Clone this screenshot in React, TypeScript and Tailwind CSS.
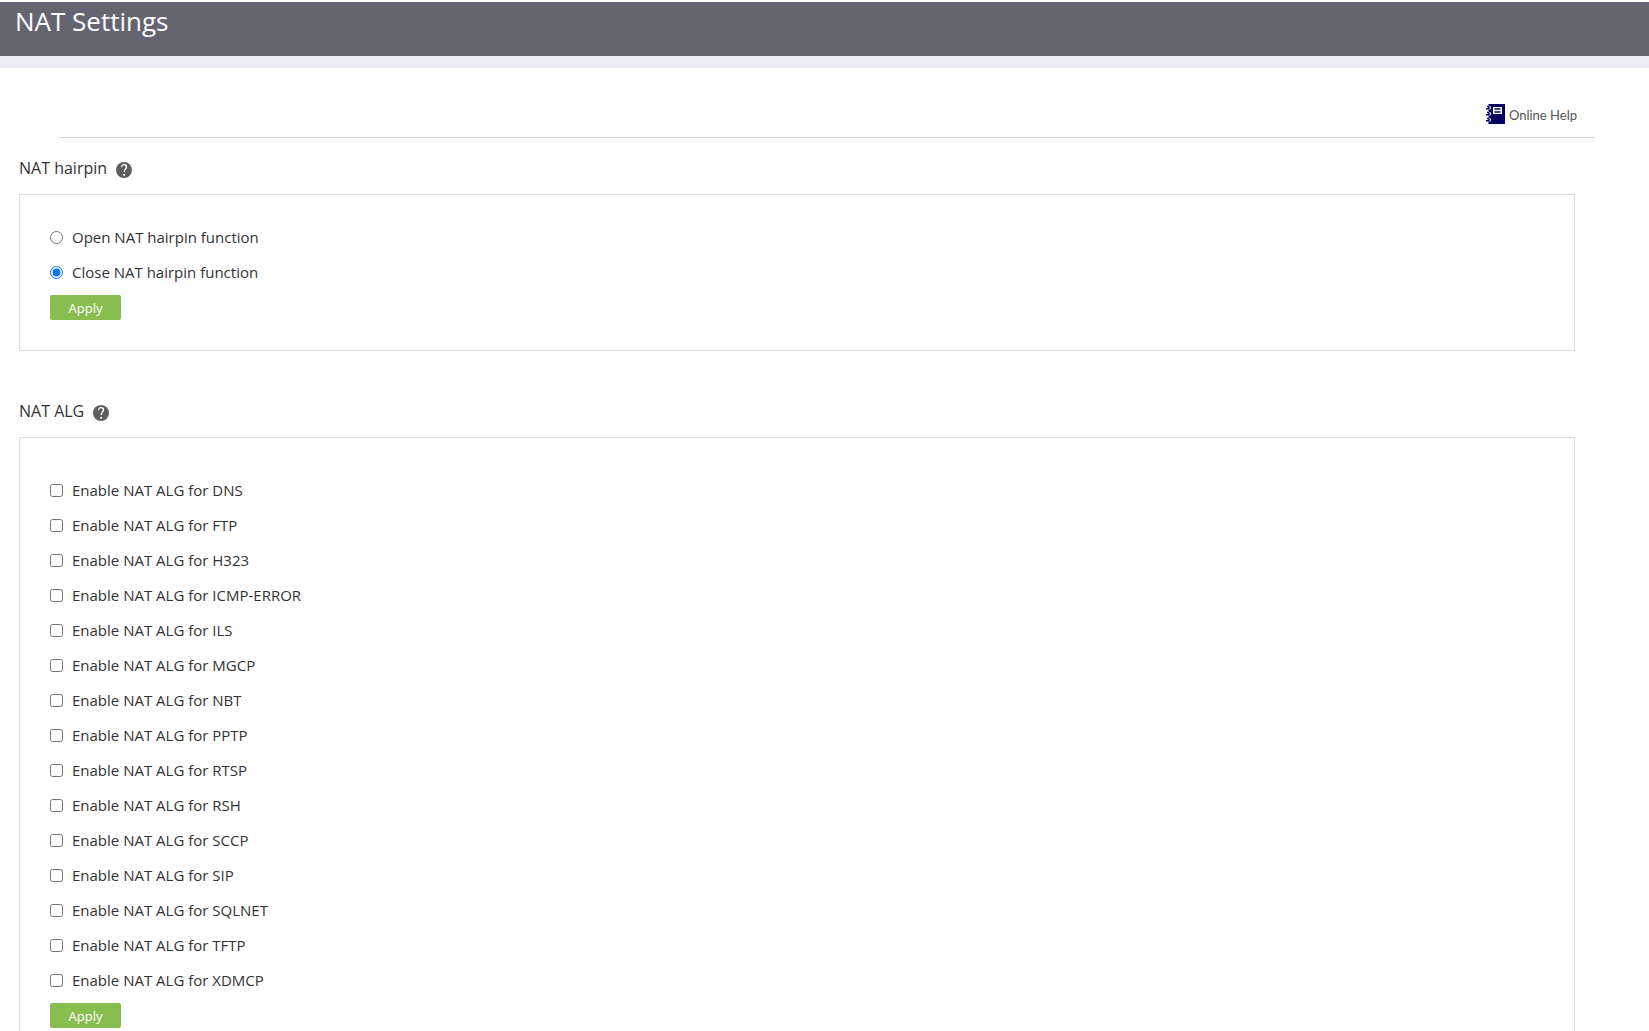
import type { ReactNode } from 'react';

const hairpinOptions = [
  { value: 'open', label: 'Open NAT hairpin function' },
  { value: 'close', label: 'Close NAT hairpin function' },
];

const protocols = [
  'DNS',
  'FTP',
  'H323',
  'ICMP-ERROR',
  'ILS',
  'MGCP',
  'NBT',
  'PPTP',
  'RTSP',
  'RSH',
  'SCCP',
  'SIP',
  'SQLNET',
  'TFTP',
  'XDMCP',
];

function HelpBookIcon() {
  return (
    <svg width="19" height="20" viewBox="0 0 19 20" aria-hidden="true">
      <path fill="#00005c" d="M2.500 0H19v20H2.500z" />
      <path fill="#fff" d="M7 3h9v7H7z" />
      <path fill="#00005c" d="M8.500 4.300h6v1.400h-6zM8.500 7.300h6v1.400h-6z" />
      {[4, 10, 16].map((y) => (
        <g key={y} fill="none">
          <path d={`M2 ${y - 2.2}h1.200a1.800 1.800 0 0 1 0 3.800H2z`} fill="#dde" />
          <path d={`M0 ${y + 0.8}h2.400a1.200 1.200 0 0 0 0-2.200H1`} stroke="#00005c" strokeWidth="1.500" />
        </g>
      ))}
    </svg>
  );
}

function QuestionIcon() {
  return (
    <svg width="16" height="16" viewBox="0 0 16 16" aria-hidden="true">
      <circle cx="8" cy="8" r="8" fill="#5f5d5e" />
      <path
        d="M5.700 5.200C5.700 3.200 6.700 2.600 8 2.600c1.500 0 2.600.7 2.600 2.200 0 2-2.300 2.400-2.400 5.200"
        fill="none"
        stroke="#fff"
        strokeWidth="1.200"
      />
      <path fill="#fff" d="M9 2.600c1.300.3 2 1 2 2.200s-.8 1.900-1.500 2.600c.4-1.600.5-3.400-.5-4.800zM7.200 12h1.800v1.800H7.200z" />
    </svg>
  );
}

function ApplyButton() {
  return (
    <button
      type="submit"
      className="block mt-[5px] w-[71px] h-[25px] rounded-xs bg-[#88bd4f] text-white text-[13px] font-medium leading-6"
    >
      Apply
    </button>
  );
}

function Section({
  title,
  className,
  children,
}: {
  title: string;
  className: string;
  children: ReactNode;
}) {
  return (
    <section className="mb-12">
      <div className="flex items-center gap-[9px] h-6 mb-[14px]">
        <h2 className="text-[16px] leading-6">{title}</h2>
        <button type="button" aria-label={`About ${title}`} className="pt-1">
          <QuestionIcon />
        </button>
      </div>
      <form
        className={`border border-[#dcdcdc] px-[30px] pb-[30px] ${className}`}
        onSubmit={(e) => e.preventDefault()}
      >
        {children}
        <ApplyButton />
      </form>
    </section>
  );
}

function App() {
  return (
    <div className="bg-white pt-0.5 text-[#333] font-['Open_Sans','Noto_Sans',sans-serif]">
      <header className="h-[66px] bg-[#646571] border-b-12 border-[#eeeef8] px-[15px]">
        <h1 className="text-[26px] leading-[38px] text-white">NAT Settings</h1>
      </header>
      <div className="flex justify-end items-center ml-[59px] mr-[54px] mt-6 h-[46px] pr-[18px] border-b border-[#d8d8d8]">
        <a
          href="#help"
          className="flex items-start gap-1 text-[13px] leading-[22px] text-[#555] font-['Lato','Open_Sans',sans-serif]"
        >
          <HelpBookIcon />
          Online Help
        </a>
      </div>
      <main className="pl-[19px] pr-[74px] pt-[18px]">
        <Section title="NAT hairpin" className="pt-[25px]">
          {hairpinOptions.map(({ value, label }) => (
            <label key={value} className="flex items-center gap-[9px] h-[35px] w-fit text-[15px]">
              <input
                type="radio"
                name="hairpin"
                value={value}
                defaultChecked={value === 'close'}
                className="size-[13px]"
              />
              {label}
            </label>
          ))}
        </Section>
        <Section title="NAT ALG" className="pt-[35px]">
          {protocols.map((name) => (
            <label key={name} className="flex items-center gap-[9px] h-[35px] w-fit text-[15px]">
              <input type="checkbox" name="alg" value={name} className="size-[13px]" />
              Enable NAT ALG for {name}
            </label>
          ))}
        </Section>
      </main>
    </div>
  );
}

export default App;
